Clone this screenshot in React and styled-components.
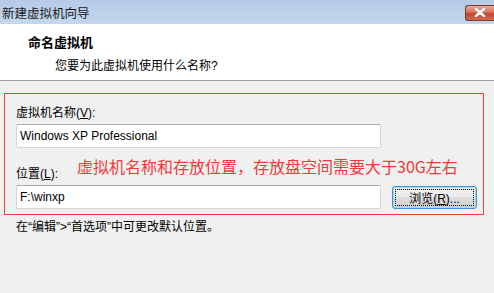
import React from "react";
import styled, { createGlobalStyle } from "styled-components";

const Global = createGlobalStyle`
  html, body { margin: 0; padding: 0; background: #f0f0f0; }
  body { font-family: "Liberation Sans", "Noto Sans CJK SC", sans-serif; font-size: 12px; color: #000; }
`;

const Win = styled.div`
  width: 494px;
  height: 293px;
  background: #f0f0f0;
  overflow: hidden;
  display: flex;
  flex-direction: column;
`;

const TitleBar = styled.div`
  height: 24px;
  flex-shrink: 0;
  background: linear-gradient(#b4cbe6, #c3d6ec);
  display: flex;
  align-items: center;
  justify-content: space-between;
  padding-left: 2px;
  font-size: 12.5px;
  color: #1a1a1a;
`;

const CloseBtn = styled.div`
  width: 28px;
  height: 14px;
  margin-top: 1px;
  border: 1px solid #7d3a2e;
  border-right: none;
  border-radius: 3px 0 0 3px;
  background: linear-gradient(#e9a99a 0%, #d8705a 45%, #c0462e 55%, #d36a50 100%);
  display: flex;
  align-items: center;
  justify-content: center;
`;

const Header = styled.div`
  height: 56px;
  flex-shrink: 0;
  background: #fff;
  border-bottom: 1px solid #a0a0a0;
  padding-left: 28px;
  display: flex;
  flex-direction: column;
  justify-content: center;
  gap: 5px;
`;

const HeadTitle = styled.div`
  font-weight: bold;
  font-size: 13px;
`;

const HeadSub = styled.div`
  padding-left: 27px;
  font-size: 12px;
`;

const Body = styled.div`
  padding: 12px 10px 0 4px;
`;

const RedBox = styled.div`
  width: 480px;
  height: 122px;
  box-sizing: border-box;
  border: 1px solid #f03a3a;
  padding: 12px 0 0 11px;
`;

const Label = styled.div`
  font-size: 12px;
  line-height: 14px;
  height: 14px;
  white-space: nowrap;
  u { text-decoration: underline; }
`;

const Row = styled.div`
  display: flex;
  align-items: center;
  gap: 11px;
  margin-top: ${(p) => p.$top || 0}px;
`;

const Field = styled.div`
  width: 365px;
  height: 24px;
  box-sizing: border-box;
  background: #fff;
  border: 1px solid #d6d6d6;
  border-top-color: #ababab;
  border-radius: 2px;
  padding-left: 3px;
  display: flex;
  align-items: center;
  font-size: 12px;
`;

const LabelRow = styled.div`
  display: flex;
  align-items: center;
  margin-top: 14px;
  height: 24px;
`;

const Note = styled.div`
  margin-left: 19px;
  margin-top: -16px;
  color: #f03a3a;
  font-size: 16px;
  font-family: "Noto Sans CJK SC", sans-serif;
  white-space: nowrap;
`;

const Browse = styled.button`
  width: 85px;
  height: 23px;
  box-sizing: border-box;
  border: 1px solid #3c94d2;
  border-radius: 3px;
  background: linear-gradient(#f2f2f2 0%, #ebebeb 45%, #dddddd 50%, #cfcfcf 100%);
  box-shadow: inset 0 0 0 1px #a6d6f2;
  font: inherit;
  font-size: 12px;
  padding: 0;
  position: relative;
  &::after {
    content: "";
    position: absolute;
    inset: 2px;
    border: 1px dotted #000;
  }
  u { text-decoration: underline; }
`;

const Hint = styled.div`
  margin-top: 2px;
  padding-left: 12px;
  font-size: 12px;
`;

export default function App() {
  return (
    <Win>
      <Global />
      <TitleBar>
        <span>新建虚拟机向导</span>
        <CloseBtn>
          <svg width="12" height="9" viewBox="0 0 12 9">
            <path d="M2 1 L10 8 M10 1 L2 8" stroke="#fff" strokeWidth="2.4" strokeLinecap="round" />
          </svg>
        </CloseBtn>
      </TitleBar>
      <Header>
        <HeadTitle>命名虚拟机</HeadTitle>
        <HeadSub>您要为此虚拟机使用什么名称?</HeadSub>
      </Header>
      <Body>
        <RedBox>
          <Label>虚拟机名称(<u>V</u>):</Label>
          <Row $top={4}>
            <Field>Windows XP Professional</Field>
          </Row>
          <LabelRow>
            <Label>位置(<u>L</u>):</Label>
            <Note>虚拟机名称和存放位置，存放盘空间需要大于30G左右</Note>
          </LabelRow>
          <Row $top={-1}>
            <Field>F:\winxp</Field>
            <Browse>浏览(<u>R</u>)...</Browse>
          </Row>
        </RedBox>
        <Hint>在“编辑”&gt;“首选项”中可更改默认位置。</Hint>
      </Body>
    </Win>
  );
}
